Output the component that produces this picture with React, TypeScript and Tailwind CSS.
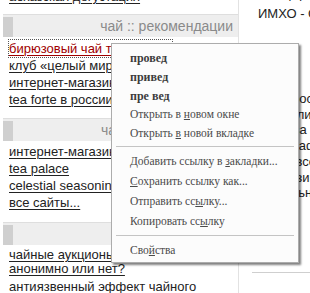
import type { ReactNode } from "react";

const sans = { fontFamily: '"Liberation Sans", Arial, sans-serif' };
const serif = { fontFamily: '"Liberation Serif", "Times New Roman", serif' };

function Bar({ title }: { title: string }) {
  return (
    <div className="flex h-[23px] items-stretch border-t border-[#dedede] bg-[#eeeeee]">
      <div className="mt-[2px] w-[10px] shrink-0 bg-[#cfcfcf]" />
      <div className="flex flex-1 items-center justify-end pr-[5px] text-[14px] text-[#8a8a8a]">
        {title}
      </div>
    </div>
  );
}

function Item({ children, active }: { children: ReactNode; active?: boolean }) {
  return (
    <div className="whitespace-nowrap pl-[6px] leading-[17px]">
      <a
        href="#"
        className={`underline decoration-1 underline-offset-2 ${
          active ? "inline-block text-[#a00000] outline outline-dotted outline-[#555]" : "text-[#222]"
        }`}
      >
        {children}
      </a>
    </div>
  );
}

function MenuItem({ children, bold, h = "h-[20px]" }: { children: ReactNode; bold?: boolean; h?: string }) {
  return (
    <div
      className={`flex ${h} items-center whitespace-nowrap pl-[18px] ${
        bold ? "text-[12px] font-bold text-[#3c3c3c]" : "text-[11.5px] text-[#4a4a4a]"
      }`}
    >
      {children}
    </div>
  );
}

function Sep() {
  return <div className="mx-[4px] mb-[5px] mt-[3px] border-t border-[#c4c4c4]" />;
}

export default function App() {
  return (
    <div className="relative flex h-[293px] w-[310px] overflow-hidden bg-white text-[13px]" style={sans}>
      {/* left column */}
      <div className="w-[239px] shrink-0 border-r border-[#e2e2e2] pl-[3px]">
        <div className="-mt-[12px]">
          <Item>абхазская дегустация</Item>
        </div>

        <div className="mt-[9px]">
          <Bar title="чай :: рекомендации" />
        </div>
        <div className="mt-[3px]">
          <Item active>бирюзовый чай тегуаньинь</Item>
          <Item>клуб «целый мир чая»</Item>
          <Item>интернет-магазин чая</Item>
          <Item>tea forte в россии</Item>
        </div>

        <div className="mt-[10px]">
          <Bar title="чай :: где купить чай" />
        </div>
        <div className="mt-[2px]">
          <Item>интернет-магазин teaforte</Item>
          <Item>tea palace</Item>
          <Item>celestial seasonings</Item>
          <Item>все сайты...</Item>
        </div>

        <div className="mt-[11px]">
          <Bar title="чай :: статьи" />
        </div>
        <div className="mt-[3px]">
          <div className="whitespace-nowrap pl-[6px] leading-[14px]">
            <a href="#" className="text-[#222] underline decoration-1 underline-offset-2">
              чайные аукционы: покупать
              <br />
              анонимно или нет?
            </a>
          </div>
          <div className="mt-[4px] whitespace-nowrap pl-[6px] leading-[14px]">
            <a href="#" className="text-[#222] underline decoration-1 underline-offset-2">
              антиязвенный эффект чайного
            </a>
          </div>
        </div>
      </div>

      {/* right column */}
      <div className="ml-[13px] flex-1 whitespace-nowrap text-[#222]">
        <div className="-mt-[14px] pl-[6px] leading-[15px]">блог | форум</div>
        <div className="mt-[5px] pl-[6px] leading-[15px]">ИМХО - Слово редактора</div>
        <div className="mt-[70px] pl-[6px] leading-[15.7px]">
          <div>И вопрос о чае</div>
          <div>много ли чая</div>
          <div>тогда за чаем</div>
          <div>параграф о чае</div>
          <div>почти все сорта</div>
          <div>в магазин чая</div>
          <div>актуально</div>
        </div>
        <div className="mt-[71px] border-t border-[#cfcfcf]" />
      </div>

      {/* context menu */}
      <div
        className="absolute left-[111px] top-[43px] w-[188px] border border-[#acacac] bg-[#fcfcfc] pb-[1px] pt-[4px] shadow-[2px_2px_2px_rgba(0,0,0,0.5)]"
        style={serif}
      >
        <MenuItem bold h="h-[19px]">провед</MenuItem>
        <MenuItem bold h="h-[19px]">привед</MenuItem>
        <MenuItem bold h="h-[19px]">пре вед</MenuItem>
        <MenuItem h="h-[19px]">
          Открыть в&nbsp;<u>н</u>овом окне
        </MenuItem>
        <MenuItem h="h-[19px]">
          Открыть&nbsp;<u>в</u>&nbsp;новой вкладке
        </MenuItem>
        <Sep />
        <MenuItem>
          Добавить ссылку в&nbsp;<u>з</u>акладки...
        </MenuItem>
        <MenuItem>
          <u>С</u>охранить ссылку как...
        </MenuItem>
        <MenuItem>
          Отправить сс<u>ы</u>лку...
        </MenuItem>
        <MenuItem>
          Копировать сс<u>ы</u>лку
        </MenuItem>
        <Sep />
        <MenuItem>
          Сво<u>й</u>ства
        </MenuItem>
      </div>
    </div>
  );
}
